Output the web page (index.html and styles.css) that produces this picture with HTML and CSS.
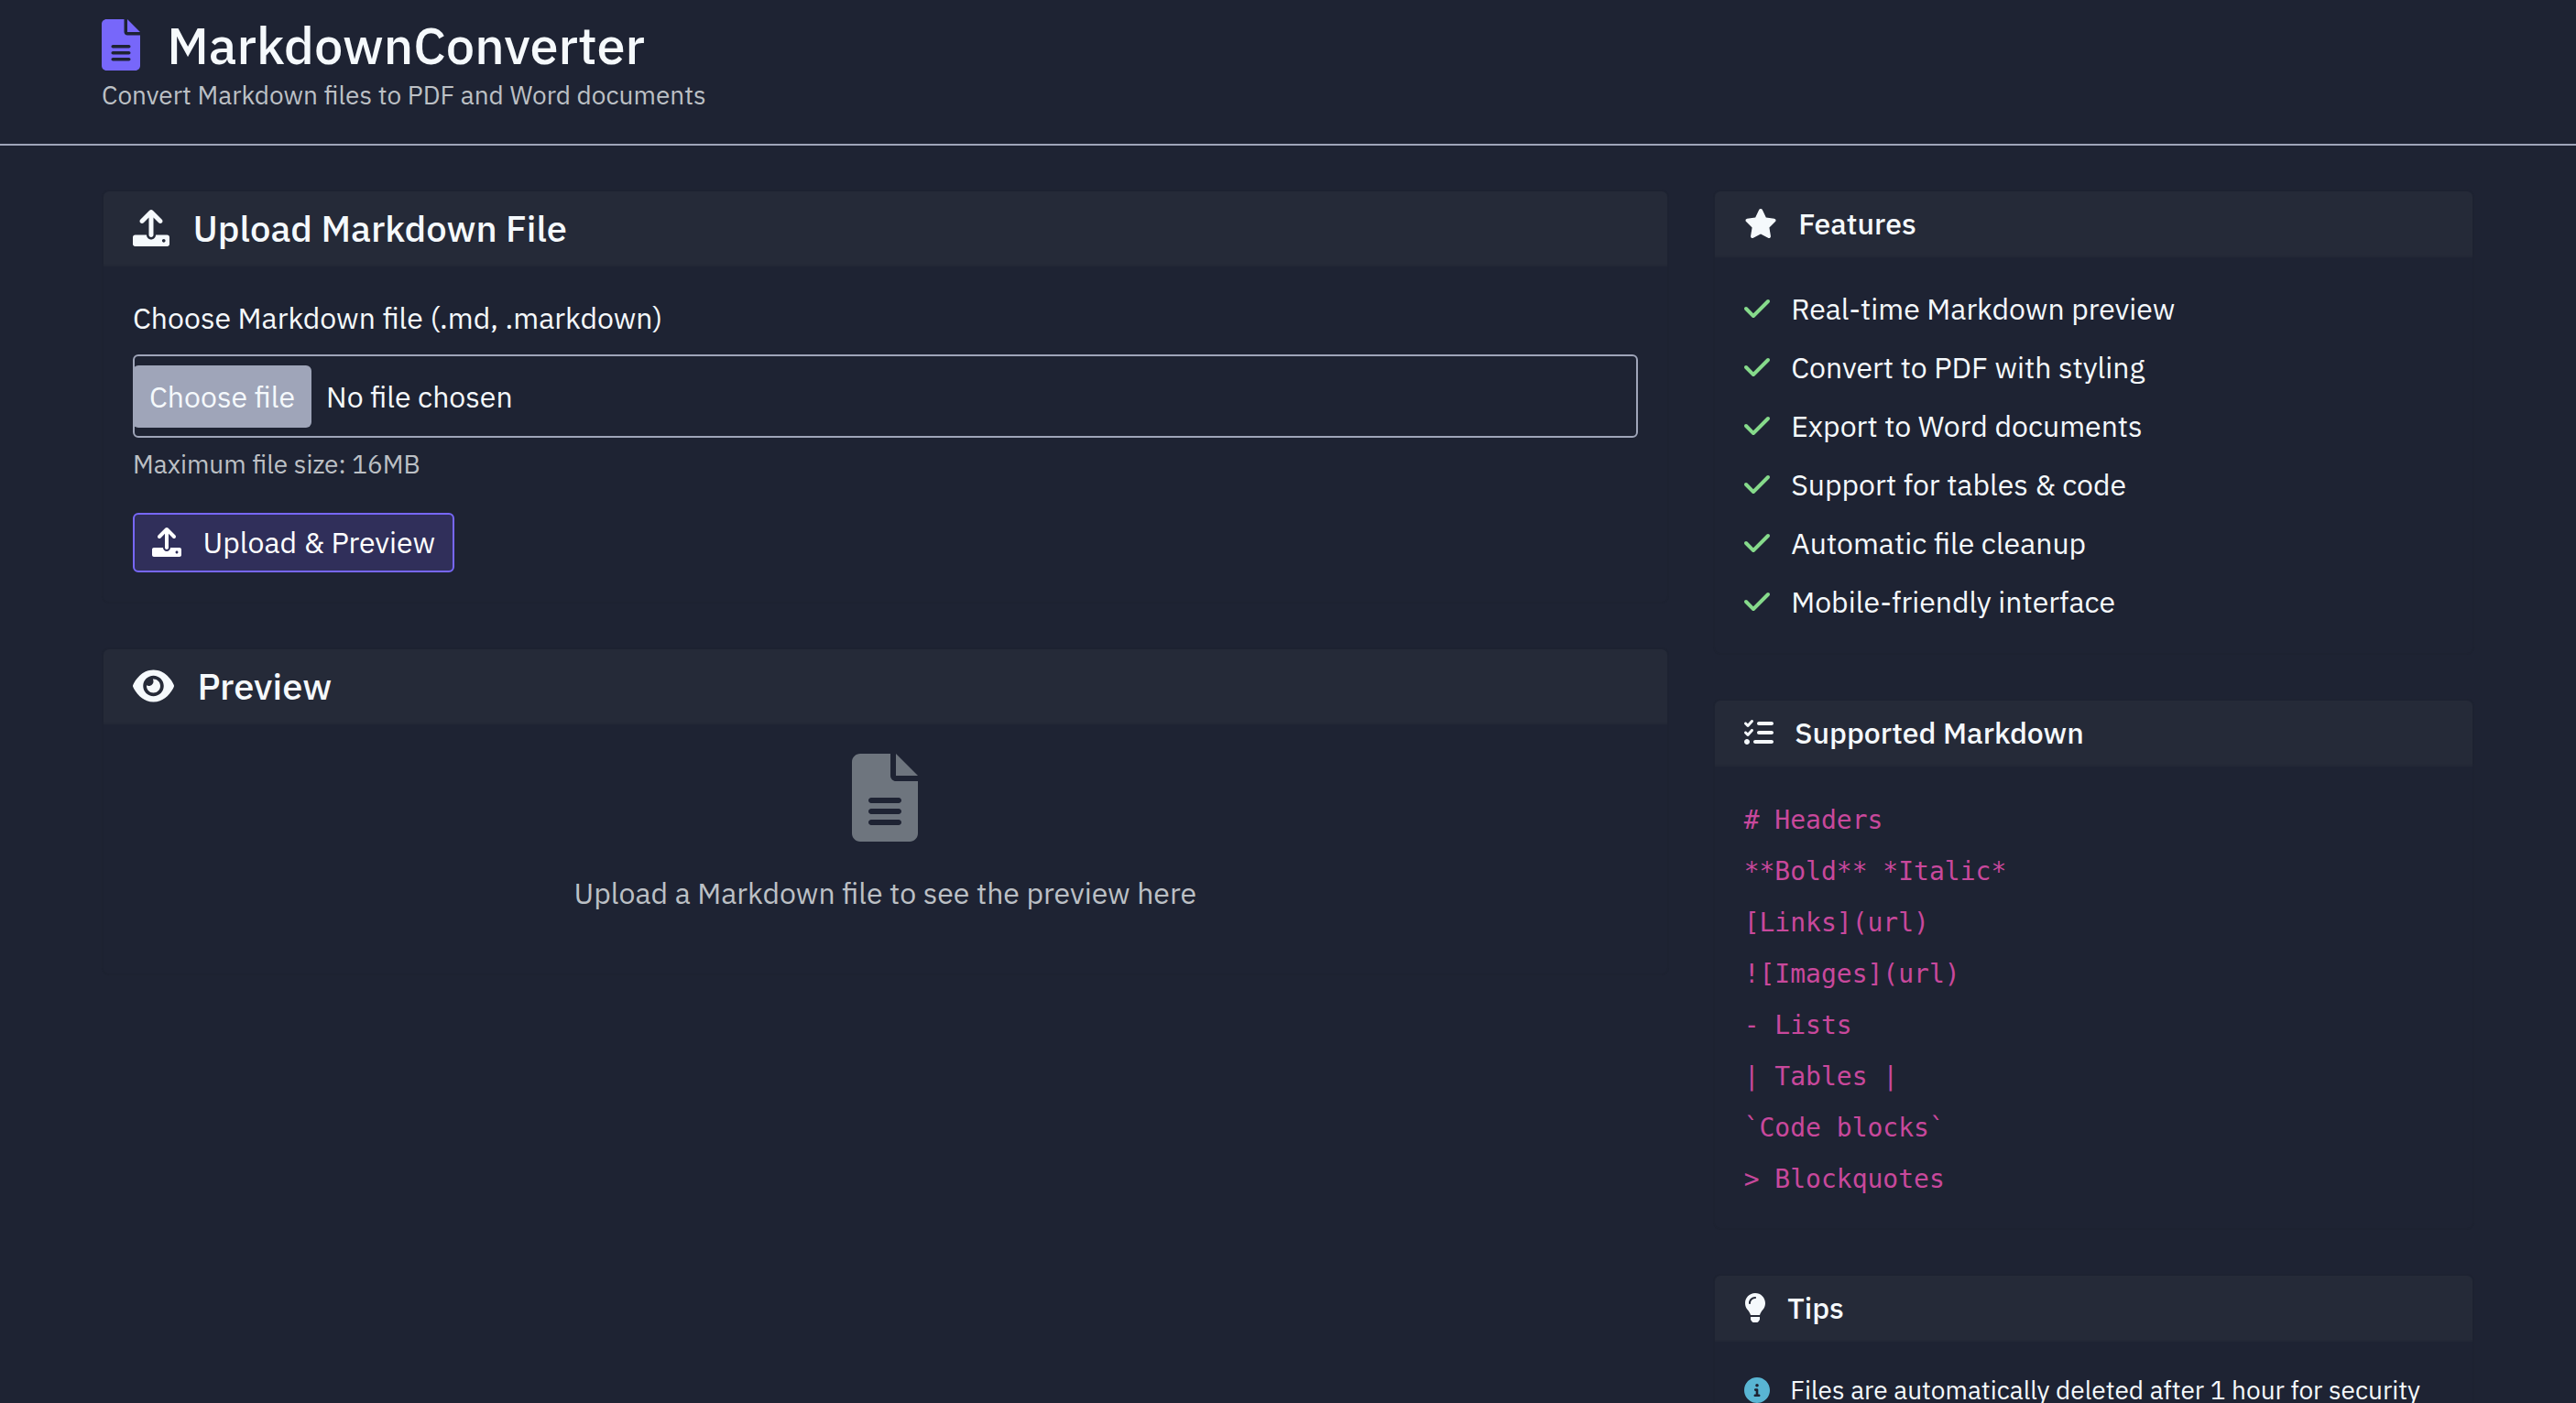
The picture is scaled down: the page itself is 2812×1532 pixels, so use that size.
FILE: index.html
```html
<!DOCTYPE html>
<html lang="en">
<head>
<meta charset="utf-8">
<title>MarkdownConverter</title>
<link rel="stylesheet" href="styles.css">
</head>
<body>
<svg class="sprite" aria-hidden="true">
  <symbol id="file" viewBox="0 0 384 512"><path d="M256 0v128h128L256 0zM224 128L224 0H48C21.49 0 0 21.49 0 48v416C0 490.5 21.49 512 48 512h288c26.51 0 48-21.49 48-48V160h-127.1C238.3 160 224 145.7 224 128zM272 416h-160C103.2 416 96 408.8 96 400C96 391.2 103.2 384 112 384h160c8.836 0 16 7.162 16 16C288 408.8 280.8 416 272 416zM272 352h-160C103.2 352 96 344.8 96 336C96 327.2 103.2 320 112 320h160c8.836 0 16 7.162 16 16C288 344.8 280.8 352 272 352zM288 272C288 280.8 280.8 288 272 288h-160C103.2 288 96 280.8 96 272C96 263.2 103.2 256 112 256h160C280.8 256 288 263.2 288 272z"/></symbol>
  <symbol id="upload" viewBox="0 0 512 512"><path d="M105.4 182.6c12.5 12.49 32.76 12.5 45.25 .001L224 109.3V352c0 17.67 14.33 32 32 32c17.67 0 32-14.33 32-32V109.3l73.38 73.38c12.49 12.49 32.75 12.49 45.25-.001c12.49-12.49 12.49-32.75 0-45.25l-128-128C272.4 3.125 264.2 0 256 0S239.6 3.125 233.4 9.375L105.4 137.4C92.88 149.9 92.88 170.1 105.4 182.6zM480 352h-160c0 35.35-28.65 64-64 64s-64-28.65-64-64H32c-17.67 0-32 14.33-32 32v96c0 17.67 14.33 32 32 32h448c17.67 0 32-14.33 32-32v-96C512 366.3 497.7 352 480 352zM432 456c-13.2 0-24-10.8-24-24c0-13.2 10.8-24 24-24s24 10.8 24 24C456 445.2 445.2 456 432 456z"/></symbol>
  <symbol id="eye" viewBox="0 0 576 512"><path d="M279.6 160.4C282.4 160.1 285.2 160 288 160C341 160 384 202.1 384 256C384 309 341 352 288 352C234.1 352 192 309 192 256C192 253.2 192.1 250.4 192.4 247.6C201.7 252.1 212.5 256 224 256C259.3 256 288 227.3 288 192C288 180.5 284.1 169.7 279.6 160.4zM480.6 112.6C527.4 156 558.7 207.1 573.5 243.7C576.8 251.6 576.8 260.4 573.5 268.3C558.7 304 527.4 355.1 480.6 399.4C433.5 443.2 368.8 480 288 480C207.2 480 142.5 443.2 95.42 399.4C48.62 355.1 17.34 304 2.461 268.3C-.8205 260.4-.8205 251.6 2.461 243.7C17.34 207.1 48.62 156 95.42 112.6C142.5 68.84 207.2 32 288 32C368.8 32 433.5 68.84 480.6 112.6V112.6zM288 112C208.5 112 144 176.5 144 256C144 335.5 208.5 400 288 400C367.5 400 432 335.5 432 256C432 176.5 367.5 112 288 112z"/></symbol>
  <symbol id="star" viewBox="0 0 576 512"><path d="M381.2 150.3L524.9 171.5C536.8 173.2 546.8 181.6 550.6 193.1C554.4 204.7 551.3 217.3 542.7 225.9L438.5 328.1L463.1 474.7C465.1 486.7 460.2 498.9 450.2 506C440.3 513.1 427.2 514 416.5 508.3L288.1 439.8L159.8 508.3C149 514 135.9 513.1 126 506C116.1 498.9 111.1 486.7 113.2 474.7L137.8 328.1L33.58 225.9C24.97 217.3 21.91 204.7 25.69 193.1C29.46 181.6 39.43 173.2 51.42 171.5L195 150.3L259.4 17.97C264.7 6.954 275.9-.0391 288.1-.0391C300.4-.0391 311.6 6.954 316.9 17.97L381.2 150.3z"/></symbol>
  <symbol id="check" viewBox="0 0 448 512"><path d="M438.6 105.4C451.1 117.9 451.1 138.1 438.6 150.6L182.6 406.6C170.1 419.1 149.9 419.1 137.4 406.6L9.372 278.6C-3.124 266.1-3.124 245.9 9.372 233.4C21.87 220.9 42.13 220.9 54.63 233.4L159.1 338.7L393.4 105.4C405.9 92.88 426.1 92.88 438.6 105.4H438.6z"/></symbol>
  <symbol id="tasks" viewBox="0 0 512 512"><path d="M152.1 38.16C161.9 47.03 162.7 62.2 153.8 72.06L81.84 152.1C77.43 156.9 71.21 159.8 64.63 159.1C58.05 160.2 51.69 157.6 47.03 152.1L7.029 112.1C-2.343 103.6-2.343 88.4 7.029 79.03C16.4 69.66 31.6 69.66 40.97 79.03L63.08 101.1L118.2 39.94C127 30.09 142.2 29.29 152.1 38.16V38.16zM152.1 198.2C161.9 207 162.7 222.2 153.8 232.1L81.84 312.1C77.43 316.9 71.21 319.8 64.63 319.1C58.05 320.2 51.69 317.6 47.03 312.1L7.029 272.1C-2.343 263.6-2.343 248.4 7.029 239C16.4 229.7 31.6 229.7 40.97 239L63.08 261.1L118.2 199.9C127 190.1 142.2 189.3 152.1 198.2V198.2zM224 96C224 78.33 238.3 64 256 64H480C497.7 64 512 78.33 512 96C512 113.7 497.7 128 480 128H256C238.3 128 224 113.7 224 96V96zM224 256C224 238.3 238.3 224 256 224H480C497.7 224 512 238.3 512 256C512 273.7 497.7 288 480 288H256C238.3 288 224 273.7 224 256zM160 416C160 398.3 174.3 384 192 384H480C497.7 384 512 398.3 512 416C512 433.7 497.7 448 480 448H192C174.3 448 160 433.7 160 416zM0 416C0 389.5 21.49 368 48 368C74.51 368 96 389.5 96 416C96 442.5 74.51 464 48 464C21.49 464 0 442.5 0 416z"/></symbol>
  <symbol id="bulb" viewBox="0 0 384 512"><path d="M112.1 454.3c0 6.297 1.816 12.44 5.284 17.69l17.14 25.69c5.25 7.875 17.17 14.28 26.64 14.28h61.67c9.438 0 21.36-6.401 26.61-14.28l17.08-25.68c2.938-4.438 5.348-12.37 5.348-17.7L272 415.1h-160L112.1 454.3zM191.4 .0132C89.44 .3257 16 82.97 16 175.1c0 44.38 16.44 84.84 43.56 115.8c16.53 18.84 42.34 58.23 52.22 91.45c.0313 .25 .0938 .5166 .125 .7823h160.2c.0313-.2656 .0938-.5166 .125-.7823c9.875-33.22 35.69-72.61 52.22-91.45C351.6 260.8 368 220.4 368 175.1C368 78.61 288.9-.2837 191.4 .0132zM192 96.01c-44.13 0-80 35.89-80 79.1C112 184.8 104.8 192 96 192S80 184.8 80 176c0-61.76 50.25-111.1 112-111.1c8.844 0 16 7.159 16 16S200.8 96.01 192 96.01z"/></symbol>
  <symbol id="info" viewBox="0 0 512 512"><path d="M256 0C114.6 0 0 114.6 0 256s114.6 256 256 256s256-114.6 256-256S397.4 0 256 0zM256 128c17.67 0 32 14.33 32 32c0 17.67-14.33 32-32 32S224 177.7 224 160C224 142.3 238.3 128 256 128zM296 384h-80C202.8 384 192 373.3 192 360s10.75-24 24-24h16v-64H224c-13.25 0-24-10.75-24-24S210.8 224 224 224h32c13.25 0 24 10.75 24 24v88h16c13.25 0 24 10.75 24 24S309.3 384 296 384z"/></symbol>
</svg>

<header class="site-header">
  <div class="container">
    <h1 class="site-title"><svg class="icon icon-narrow icon-primary"><use href="#file"/></svg> MarkdownConverter</h1>
    <p class="tagline">Convert Markdown files to PDF and Word documents</p>
  </div>
</header>

<main class="container layout">
  <div class="column">
    <section class="card">
      <h2 class="card-header card-title"><svg class="icon"><use href="#upload"/></svg> Upload Markdown File</h2>
      <form class="card-body">
        <label class="field-label" for="markdown-file">Choose Markdown file (.md, .markdown)</label>
        <div class="file-field">
          <span class="file-button">Choose file</span>
          <span>No file chosen</span>
          <input class="file-input" type="file" id="markdown-file" accept=".md,.markdown">
        </div>
        <p class="hint">Maximum file size: 16MB</p>
        <button class="button" type="submit"><svg class="icon"><use href="#upload"/></svg> Upload &amp; Preview</button>
      </form>
    </section>

    <section class="card">
      <h2 class="card-header card-title"><svg class="icon icon-wide"><use href="#eye"/></svg> Preview</h2>
      <div class="card-body empty">
        <svg class="empty-icon"><use href="#file"/></svg>
        <p class="empty-text">Upload a Markdown file to see the preview here</p>
      </div>
    </section>
  </div>

  <aside class="column">
    <section class="card">
      <h3 class="card-header card-subtitle"><svg class="icon icon-wide"><use href="#star"/></svg> Features</h3>
      <ul class="card-body list">
        <li><svg class="icon icon-check"><use href="#check"/></svg> Real-time Markdown preview</li>
        <li><svg class="icon icon-check"><use href="#check"/></svg> Convert to PDF with styling</li>
        <li><svg class="icon icon-check"><use href="#check"/></svg> Export to Word documents</li>
        <li><svg class="icon icon-check"><use href="#check"/></svg> Support for tables &amp; code</li>
        <li><svg class="icon icon-check"><use href="#check"/></svg> Automatic file cleanup</li>
        <li><svg class="icon icon-check"><use href="#check"/></svg> Mobile-friendly interface</li>
      </ul>
    </section>

    <section class="card">
      <h3 class="card-header card-subtitle"><svg class="icon"><use href="#tasks"/></svg> Supported Markdown</h3>
      <ul class="card-body list list-code">
        <li><code># Headers</code></li>
        <li><code>**Bold** *Italic*</code></li>
        <li><code>[Links](url)</code></li>
        <li><code>![Images](url)</code></li>
        <li><code>- Lists</code></li>
        <li><code>| Tables |</code></li>
        <li><code>`Code blocks`</code></li>
        <li><code>&gt; Blockquotes</code></li>
      </ul>
    </section>

    <section class="card">
      <h3 class="card-header card-subtitle"><svg class="icon icon-narrow"><use href="#bulb"/></svg> Tips</h3>
      <ul class="card-body list list-small">
        <li><svg class="icon icon-info"><use href="#info"/></svg> Files are automatically deleted after 1 hour for security</li>
      </ul>
    </section>
  </aside>
</main>
</body>
</html>
```
FILE: styles.css
```css
*, *::before, *::after { box-sizing: border-box; }

:root {
  --bg: #1e2333;
  --panel: #252a38;
  --text: #f5f9fc;
  --muted: #bcc0c5;
  --line: #9fa5b9;
  --primary: #7767fa;
}

html { background: var(--bg); }

body {
  height: 100vh;
  margin: 0;
  overflow: hidden;
  background: var(--bg);
  color: var(--text);
  font: 400 32px/48px "IBM Plex Sans", Roboto, "Liberation Sans", sans-serif;
}

h1, h2, h3, p, ul { margin: 0; font-weight: 500; }
p, ul { font-weight: 400; }

.sprite { display: none; }

.icon {
  width: 1em;
  height: 1em;
  margin-right: 16px;
  fill: currentColor;
  vertical-align: -0.125em;
}
.icon-narrow { width: 0.75em; }
.icon-wide { width: 1.125em; }
.icon-primary { color: var(--primary); }
.icon-check { width: 0.875em; color: #86da8b; }
.icon-info { color: #59b5d3; }

.container {
  width: 100%;
  max-width: 2638px;
  margin: 0 auto;
  padding: 0 24px;
}

.site-header {
  padding: 16px 0 32px;
  border-bottom: 2px solid var(--line);
}
.site-title { font-size: 56px; line-height: 67px; }
.tagline { color: var(--muted); font-size: 28px; line-height: 42px; }

.layout {
  display: grid;
  grid-template-columns: minmax(0, 2fr) minmax(0, 1fr);
  margin-top: 48px;
  padding: 0;
}
.column {
  display: flex;
  flex-direction: column;
  gap: 48px;
  padding: 0 24px;
}

.card { border: 2px solid #1d2231; border-radius: 8px; }
.card-header {
  padding: 16px 32px;
  background: var(--panel);
  border-bottom: 2px solid #232836;
  border-radius: 6px 6px 0 0;
}
.card-title { font-size: 40px; line-height: 48px; }
.card-subtitle { font-size: 32px; line-height: 38px; }
.card-body { padding: 32px; }

.field-label { display: block; margin-bottom: 16px; }
.file-field {
  position: relative;
  display: flex;
  align-items: center;
  gap: 16px;
  padding: 10px 0 9px;
  border: 2px solid var(--line);
  border-radius: 6px;
}
.file-button {
  margin-left: -2px;
  padding: 10px 18px;
  border-radius: 6px;
  background: var(--line);
}
.file-input {
  position: absolute;
  inset: 0;
  width: 100%;
  opacity: 0;
}
.hint {
  margin: 8px 0 32px;
  color: var(--muted);
  font-size: 28px;
  line-height: 42px;
}
.button {
  display: block;
  padding: 6px 19px 7px;
  border: 2px solid var(--primary);
  border-radius: 6px;
  background: #302f5a;
  color: #fff;
  font: inherit;
}

.empty { text-align: center; color: var(--muted); }
.empty-icon {
  display: block;
  width: 72px;
  height: 96px;
  margin: 0 auto 32px;
  fill: #6e757e;
}
.empty-text { margin-bottom: 32px; }

.list {
  display: flex;
  flex-direction: column;
  gap: 16px;
  list-style: none;
}
.list-code { gap: 8px; }
.list-small { font-size: 28px; line-height: 42px; }

code {
  color: #c8489c;
  font: 28px "DejaVu Sans Mono", monospace;
}
```
